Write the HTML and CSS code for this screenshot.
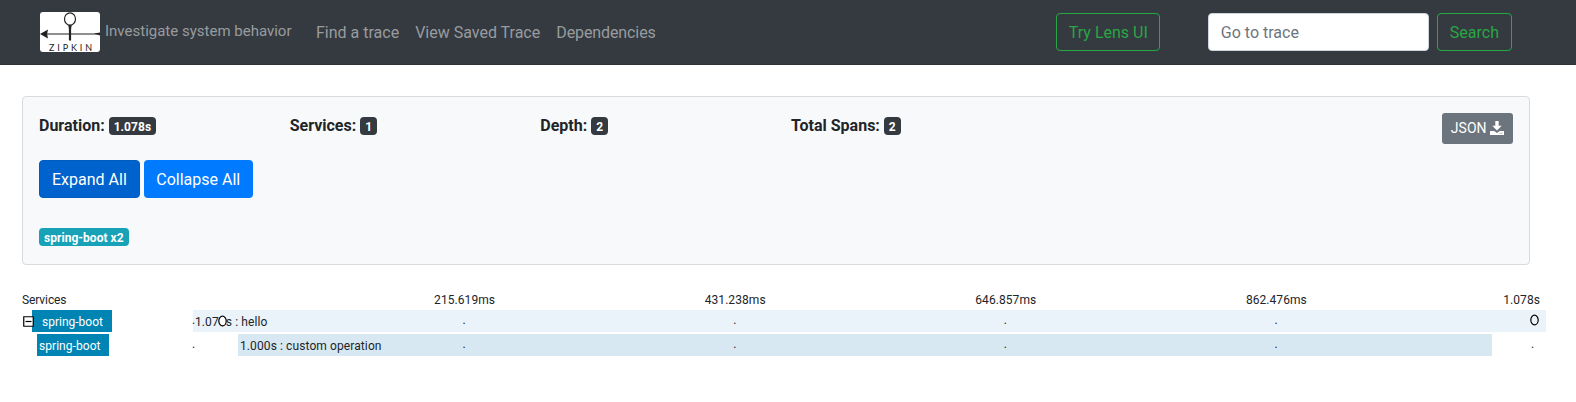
FILE: index.html
```html
<!DOCTYPE html>
<html lang="en">
<head>
<meta charset="utf-8">
<title>Zipkin</title>
<link rel="stylesheet" href="styles.css">
</head>
<body>
<nav class="navbar">
  <svg class="logo" viewBox="0 0 60 40" width="60" height="40">
    <rect width="60" height="40" rx="3" fill="#fff"/>
    <ellipse cx="30" cy="7" rx="5.5" ry="6.2" fill="none" stroke="#222" stroke-width="1.2"/>
    <path d="M28.3 13h3.4l-.6 4v11.5h-2.2V17z" fill="#222"/>
    <path d="M5 22h53" stroke="#222" stroke-width="1.1"/>
    <path d="M0 22l8-4.5-.9 4.5.9 4.5zM54 21.6l6-1v3z" fill="#222"/>
    <text x="9" y="39.3" class="logo-text" textLength="43">ZIPKIN</text>
  </svg>
  <span class="tagline">Investigate system behavior</span>
  <a class="nav-link">Find a trace</a>
  <a class="nav-link">View Saved Trace</a>
  <a class="nav-link deps">Dependencies</a>
  <button class="btn btn-outline lens">Try Lens UI</button>
  <input class="trace-input" type="text" placeholder="Go to trace">
  <button class="btn btn-outline">Search</button>
</nav>
<section class="card">
  <div class="stats">
    <div>Duration: <span class="badge">1.078s</span></div>
    <div>Services: <span class="badge">1</span></div>
    <div>Depth: <span class="badge">2</span></div>
    <div>Total Spans: <span class="badge">2</span></div>
    <button class="btn btn-json">JSON <svg width="14" height="14" viewBox="0 0 14 14"><path fill="#fff" d="M5.3 0h3.4v4.8h3L7 9.6 2.3 4.8h3zM0 10h4.2L7 12l2.8-2H14v4H0z"/><path d="M9.5 12.3h1m.8 0h1" stroke="#6c757d" stroke-width=".8"/></svg></button>
  </div>
  <div class="actions">
    <button class="btn btn-primary active">Expand All</button>
    <button class="btn btn-primary collapse">Collapse All</button>
  </div>
  <div class="filters"><span class="badge badge-info">spring-boot x2</span></div>
</section>
<section class="timeline">
  <div class="row header">
    <div class="service">Services</div>
    <div class="track"><span></span><span>215.619ms</span><span>431.238ms</span><span>646.857ms</span><span>862.476ms</span><span class="end">1.078s</span></div>
  </div>
  <div class="row">
    <div class="service">
      <svg class="toggle" width="11" height="11" viewBox="0 0 11 11"><path d="M.75.75h9.5v9.5H.75z" fill="#fff" stroke="#000" stroke-width="1.2"/><path d="M2.5 5.5h6" stroke="#000" stroke-width="1.2"/></svg>
      <span class="name parent">spring-boot</span>
    </div>
    <div class="track dots">
      <div class="bar root">1.07<svg class="mark" width="9" height="12" viewBox="0 0 9 12"><ellipse cx="4.5" cy="6" rx="3.7" ry="4.8"/></svg>s : hello</div>
      <i>.</i><i>.</i><i>.</i><i>.</i><i>.</i><i class="last"></i>
      <svg class="mark final" width="9" height="12" viewBox="0 0 9 12"><ellipse cx="4.5" cy="6" rx="3.7" ry="4.8"/></svg>
    </div>
  </div>
  <div class="row">
    <div class="service"><span class="name child">spring-boot</span></div>
    <div class="track dots">
      <div class="bar nested">1.000s : custom operation</div>
      <i>.</i><i>.</i><i>.</i><i>.</i><i>.</i><i class="last">.</i>
    </div>
  </div>
</section>
</body>
</html>
```
FILE: styles.css
```css
* { box-sizing: border-box; }
body { margin: 0; background: #fff; color: #212529; font: 16px/24px Roboto, sans-serif; overflow: hidden; }
.navbar { display: flex; align-items: center; height: 65px; padding: 0 64px 1px 40px; background: #343a40; border-bottom: 1px solid #2d3236; color: #999c9f; }
.logo { flex: none; margin-right: 5px; }
.logo-text { font: 9px Lato, sans-serif; fill: #222; }
.tagline { width: 203px; font-size: 15px; padding-bottom: 1px; white-space: nowrap; }
.nav-link { padding: 2px 8px 0; white-space: nowrap; }
.deps { letter-spacing: -0.1px; }
.btn { height: 38px; padding: 2px 12px 0; border: 1px solid transparent; border-radius: 4px; font: 16px/24px Roboto, sans-serif; white-space: nowrap; }
.btn-outline { color: #28a745; border-color: #28a745; background: transparent; }
.lens { width: 104px; margin-left: auto; margin-right: 48px; }
.trace-input { width: 221px; height: 38px; margin-right: 8px; padding: 2px 12px 0; border: 1px solid #ced4da; border-radius: 4px; font: 16px/24px Roboto, sans-serif; }
.trace-input::placeholder { color: #6c757d; opacity: 1; }
.card { width: 1508px; height: 169px; margin: 31px 0 0 22px; padding: 16px; background: #f8f9fa; border: 1px solid #d9dbdd; border-radius: 4px; }
.stats { display: grid; grid-template-columns: repeat(4, 250.67px) 1fr; height: 47px; font-weight: 700; }
.stats > div { padding-top: 1px; }
.badge { display: inline-block; padding: 4px 5px 2px; border-radius: 4px; background: #343a40; color: #fff; font-size: 12px; line-height: 12px; font-weight: 700; letter-spacing: 0.04px; vertical-align: baseline; }
.badge-info { background: #17a2b8; }
.btn-json { justify-self: end; height: 31px; padding: 0 8px; border-radius: 3px; background: #6c757d; color: #fff; font-size: 14px; line-height: 21px; }
.btn-json svg { vertical-align: -2px; }
.actions { display: flex; gap: 4px; height: 65px; }
.btn-primary { padding-top: 1px; background: #007bff; color: #fff; }
.btn-primary.active { background: #0062cc; border-color: #005cbf; }
.collapse { width: 109px; padding: 1px 0 0; }
.timeline { margin: 24px 0 0 22px; font-size: 12px; line-height: 22px; }
.row { display: grid; grid-template-columns: 171px 1353px; grid-template-rows: 22px; height: 22px; margin-bottom: 2px; }
.row.header { height: 21px; margin-bottom: 0; }
.service { display: flex; align-items: center; }
.header .service { align-items: flex-start; letter-spacing: -0.1px; }
.name { height: 22px; padding-left: 2px; background: #0084b4; color: #fff; line-height: 24px; }
.parent { width: 80px; margin-left: -2px; padding-left: 10px; }
.child { width: 72px; margin-left: 15px; letter-spacing: 0.05px; }
.toggle { position: relative; z-index: 1; flex: none; margin-left: 1px; }
.track { position: relative; display: grid; grid-template-columns: repeat(5, 270.6px) 0; }
.header span { justify-self: start; transform: translateX(-50%); margin-left: 1px; letter-spacing: 0.07px; }
.header span.end { transform: none; justify-self: end; padding-right: 6px; }
.bar { position: absolute; top: 0; height: 22px; padding-left: 2px; line-height: 25px; letter-spacing: 0.1px; }
.root { left: 0; width: 1353px; background: #eaf3f9; }
.nested { left: 45px; width: 1254px; background: #d8e8f2; }
.dots i { position: relative; font-style: normal; line-height: 21px; left: -1px; }
.dots i.last { left: -15px; }
.mark { fill: #fff; stroke: #000; stroke-width: 1.2; vertical-align: -1px; margin: 0 -1px; }
.final { position: absolute; top: 4px; left: 1338px; fill: none; }
```
